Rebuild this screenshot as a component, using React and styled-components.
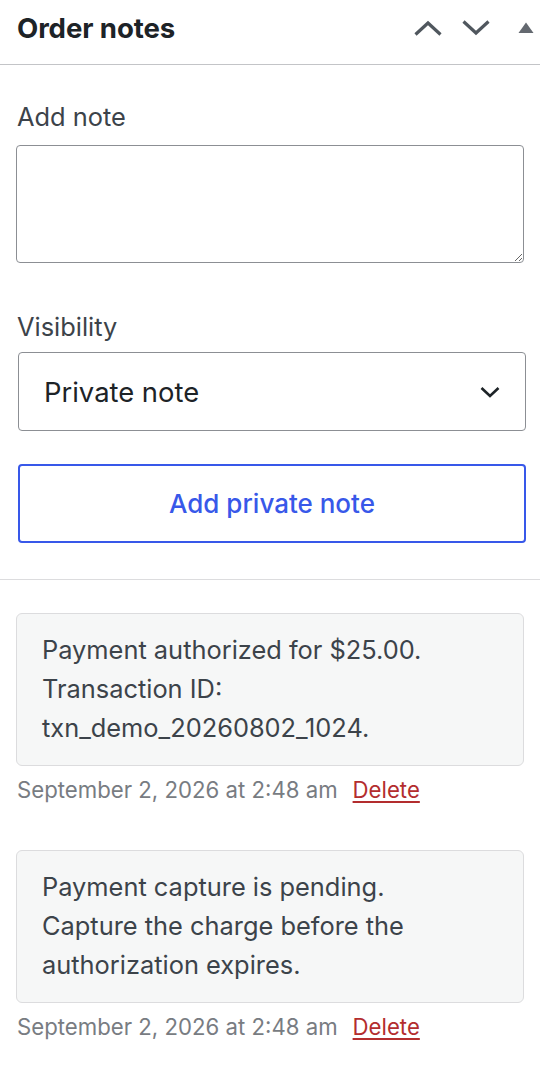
import React from "react";
import styled, { createGlobalStyle } from "styled-components";

const Global = createGlobalStyle`
  * { box-sizing: border-box; }
  html, body { margin: 0; padding: 0; background: #fff; }
  body { font-family: Inter, "Noto Sans", "Liberation Sans", sans-serif; color: #3c434a; }
`;

const Panel = styled.div`
  width: 540px;
  background: #fff;
`;

const Header = styled.div`
  display: flex;
  align-items: center;
  justify-content: space-between;
  height: 65px;
  padding: 0 6px 8px 17px;
  border-bottom: 1px solid #c3c4c7;
`;

const Title = styled.h2`
  margin: 0;
  font-size: 27.6px;
  font-weight: 700;
  color: #1d2327;
  letter-spacing: -0.1px;
`;

const HeaderActions = styled.div`
  display: flex;
  align-items: center;
  gap: 20px;
`;

const IconButton = styled.span`
  display: inline-flex;
  align-items: center;
  justify-content: center;
  color: #50575e;
  margin-left: ${(p) => p.$extra || 0}px;
`;

const Form = styled.div`
  display: flex;
  flex-direction: column;
  padding: 36px 16px 36px 16px;
  border-bottom: 1px solid #dcdcde;
`;

const Label = styled.label`
  display: block;
  font-size: 25.4px;
  line-height: 32px;
  color: #3c434a;
  padding-left: 1px;
  margin-top: ${(p) => p.$top || 0}px;
`;

const TextArea = styled.textarea`
  display: block;
  width: 508px;
  height: 118px;
  margin-top: 12px;
  border: 1px solid #8c8f94;
  border-radius: 4px;
  font: inherit;
  resize: vertical;
  background: #fff;
`;

const SelectBox = styled.div`
  display: flex;
  align-items: center;
  justify-content: space-between;
  width: 508px;
  height: 79px;
  margin: 9px 0 0 2px;
  padding: 0 24px 0 25px;
  border: 1px solid #8c8f94;
  border-radius: 4px;
  font-size: 27.4px;
  color: #1d2327;
`;

const Button = styled.button`
  width: 508px;
  height: 79px;
  margin: 33px 0 0 2px;
  border: 2px solid #3858e9;
  border-radius: 4px;
  background: #fff;
  color: #3858e9;
  font-family: inherit;
  font-size: 26px;
  font-weight: 500;
`;

const Notes = styled.ul`
  list-style: none;
  margin: 0;
  padding: 33px 16px 0 16px;
  display: flex;
  flex-direction: column;
  gap: 44px;
`;

const NoteItem = styled.li`
  display: flex;
  flex-direction: column;
`;

const NoteContent = styled.div`
  background: #f6f7f7;
  border: 1.5px solid #dcdcde;
  border-radius: 6px;
  padding: 16px 16px 18px 25px;
  font-size: 25.4px;
  line-height: 39px;
  color: #3c434a;
`;

const Meta = styled.div`
  margin-top: 8px;
  font-size: 22.2px;
  line-height: 32px;
  color: #787c82;
  padding-left: 1px;
`;

const DeleteLink = styled.a`
  color: #b32d2e;
  text-decoration: underline;
  text-underline-offset: 3px;
  margin-left: 15px;
`;

const ChevronUp = () => (
  <svg width="28" height="18" viewBox="0 0 28 18" fill="none">
    <path d="M1.5 15.5 L14 4 L26.5 15.5" stroke="currentColor" strokeWidth="3.2" />
  </svg>
);

const ChevronDown = () => (
  <svg width="28" height="18" viewBox="0 0 28 18" fill="none">
    <path d="M1.5 2.5 L14 14 L26.5 2.5" stroke="currentColor" strokeWidth="3.2" />
  </svg>
);

const Triangle = () => (
  <svg width="16" height="12" viewBox="0 0 16 12">
    <path d="M8 0.5 L15.5 11 L0.5 11 Z" fill="#646970" />
  </svg>
);

const SmallChevron = () => (
  <svg width="22" height="14" viewBox="0 0 22 14" fill="none">
    <path d="M2.5 3 L11 11 L19.5 3" stroke="#1d2327" strokeWidth="2.6" />
  </svg>
);

const notes = [
  {
    lines: ["Payment authorized for $25.00.", "Transaction ID:", "txn_demo_20260802_1024."],
    date: "September 2, 2026 at 2:48 am",
  },
  {
    lines: ["Payment capture is pending.", "Capture the charge before the", "authorization expires."],
    date: "September 2, 2026 at 2:48 am",
  },
];

export default function App() {
  return (
    <Panel>
      <Global />
      <Header>
        <Title>Order notes</Title>
        <HeaderActions>
          <IconButton><ChevronUp /></IconButton>
          <IconButton><ChevronDown /></IconButton>
          <IconButton $extra={8}><Triangle /></IconButton>
        </HeaderActions>
      </Header>
      <Form>
        <Label>Add note</Label>
        <TextArea />
        <Label $top={48}>Visibility</Label>
        <SelectBox>
          <span>Private note</span>
          <SmallChevron />
        </SelectBox>
        <Button>Add private note</Button>
      </Form>
      <Notes>
        {notes.map((n, i) => (
          <NoteItem key={i}>
            <NoteContent>
              {n.lines.map((l, j) => (
                <div key={j}>{l}</div>
              ))}
            </NoteContent>
            <Meta>
              {n.date}
              <DeleteLink href="#">Delete</DeleteLink>
            </Meta>
          </NoteItem>
        ))}
      </Notes>
    </Panel>
  );
}
